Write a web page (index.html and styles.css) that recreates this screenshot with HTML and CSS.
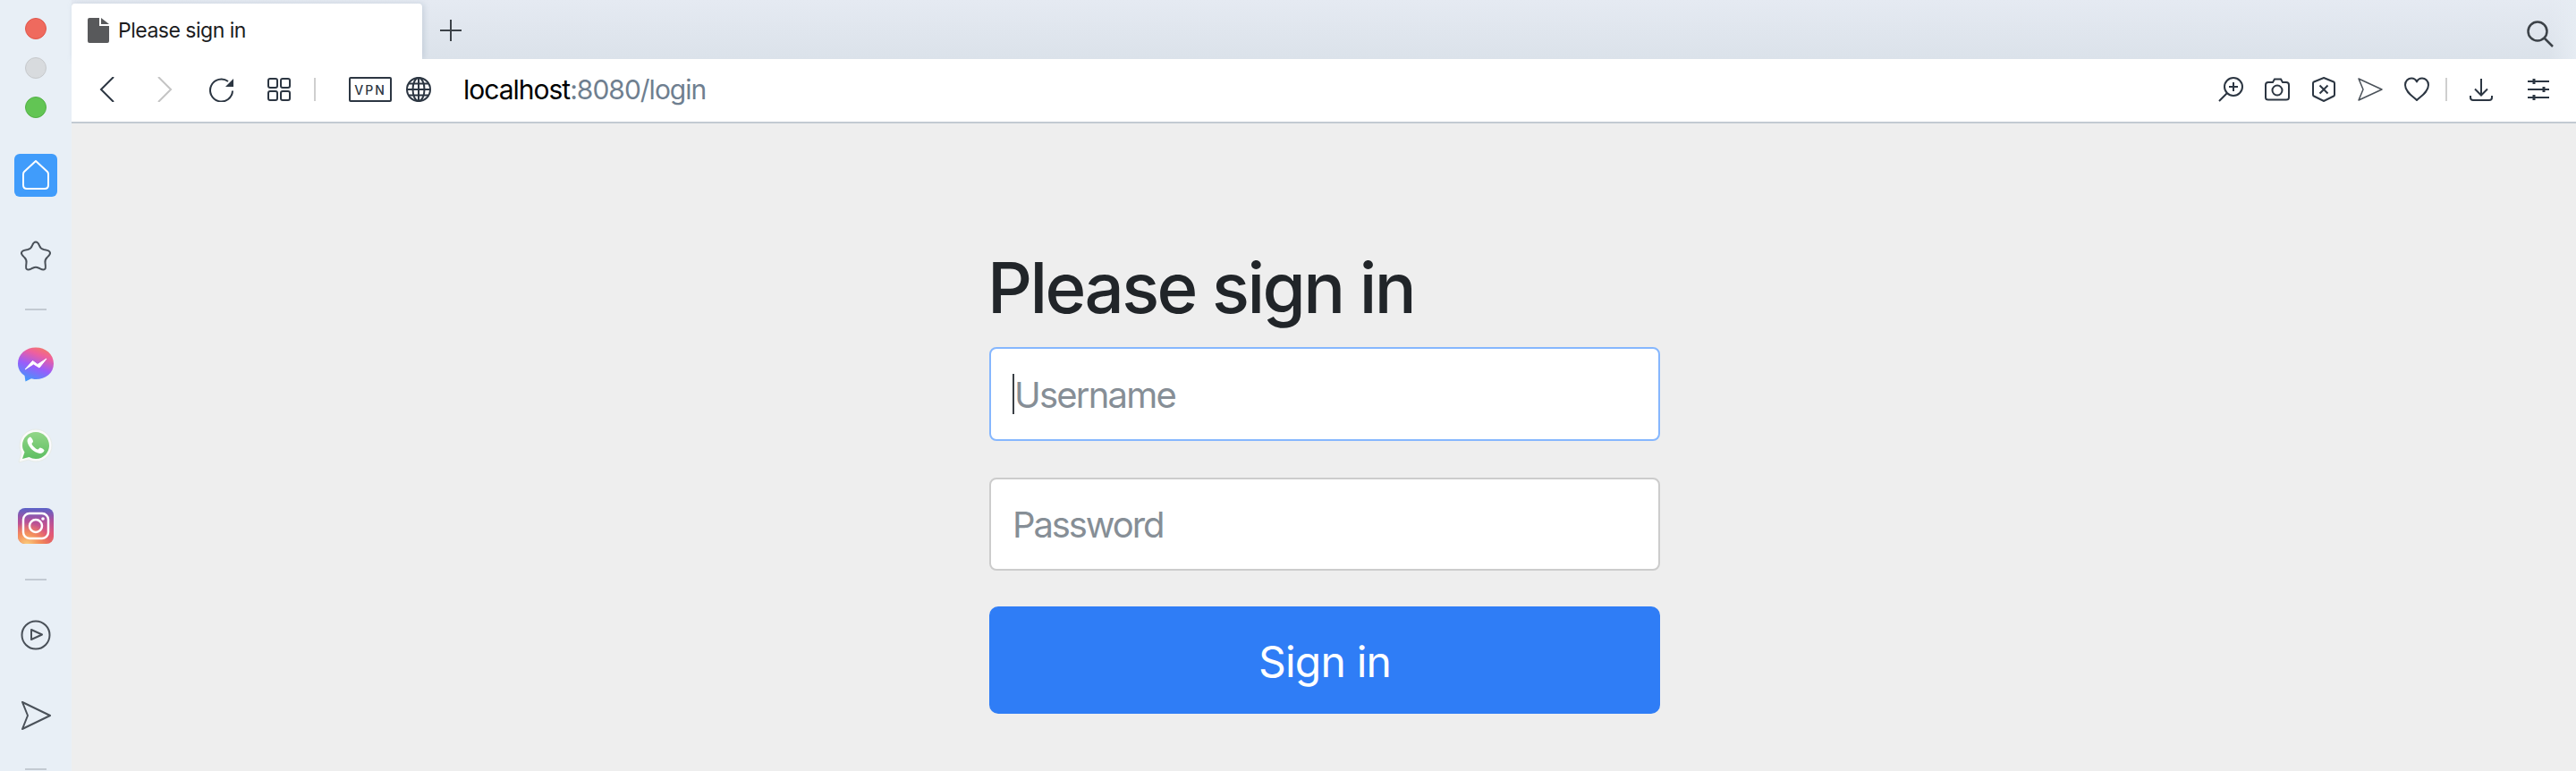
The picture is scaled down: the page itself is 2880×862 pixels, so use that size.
FILE: index.html
```html
<!DOCTYPE html>
<html lang="en">
<head>
  <meta charset="UTF-8">
  <title>Please sign in</title>
  <link rel="stylesheet" href="styles.css">
</head>
<body>
  <aside class="sidebar">
    <div class="lights">
      <span class="light red"></span>
      <span class="light grey"></span>
      <span class="light green"></span>
    </div>

    <div class="side-item home-item">
      <span class="home-btn">
        <svg width="32" height="36" viewBox="0 0 32 36"><path d="M16 2 L29 14 Q30 15 30 17 V29 Q30 33 26 33 H6 Q2 33 2 29 V17 Q2 15 3 14 Z" fill="none" stroke="#fff" stroke-width="2" stroke-linejoin="round"/></svg>
      </span>
    </div>
    <div class="side-item">
      <svg class="side-icon" width="36" height="36" viewBox="0 0 36 36"><path d="M18 2.5 C20 2.5 21 4 22 6.500 C23 9.500 24.500 10.500 27 11 C30.500 11.500 33.500 12.500 34 14.500 C34.500 16.500 32.500 18 30.500 20 C28.500 22 28 23 28.500 26 C29 29.500 29.500 32 28 33 C26 34.500 23.500 32.500 21 31.500 C19 30.500 17 30.500 15 31.500 C12.500 32.500 10 34.500 8 33 C6.500 32 7 29.500 7.500 26 C8 23 7.500 22 5.500 20 C3.500 18 1.500 16.500 2 14.500 C2.500 12.500 5.500 11.500 9 11 C11.500 10.500 13 9.500 14 6.500 C15 4 16 2.500 18 2.500 Z"/></svg>
    </div>
    <hr class="side-sep">

    <div class="side-item">
      <svg width="40" height="40" viewBox="0 0 40 40">
        <defs>
          <linearGradient id="msgr" x1="0.25" y1="1" x2="0.65" y2="0">
            <stop offset="0" stop-color="#3b9bfb"/>
            <stop offset="0.45" stop-color="#9a5cfa"/>
            <stop offset="0.8" stop-color="#ee5f9f"/>
            <stop offset="1" stop-color="#f2766e"/>
          </linearGradient>
        </defs>
        <path d="M20 0.500 C31 0.500 40 8 40 18.500 C40 29 31 36 20 36 C18 36 16.500 35.800 15 35.300 L8.500 38.500 L7.500 32 C3 29 0 24.500 0 18.500 C0 8 9 0.500 20 0.500 Z" fill="url(#msgr)"/>
        <path d="M8 25 L16.500 15.500 L22 19.500 L32 13 L24 23 L17.500 19 Z" fill="#fff" stroke="#fff" stroke-linejoin="round"/>
      </svg>
    </div>
    <div class="side-item">
      <svg width="40" height="40" viewBox="0 0 40 40">
        <defs>
          <linearGradient id="wapp" x1="0" y1="0" x2="0" y2="1">
            <stop offset="0" stop-color="#93d688"/>
            <stop offset="1" stop-color="#5fbf63"/>
          </linearGradient>
        </defs>
        <path d="M1 39 L4 28 C2.500 25.500 2 23 2 20 C2 10 10 2 20 2 C30 2 38 10 38 20 C38 30 30 38 20 38 C17 38 14.500 37.300 12 36 Z" fill="#fafafa" stroke="#e6ebe8"/>
        <path d="M5 35 L7.500 27.500 C6 25.300 5 23 5 20 C5 11.700 11.700 5 20 5 C28.300 5 35 11.700 35 20 C35 28.300 28.300 35 20 35 C17.300 35 15 34.300 12.500 33 Z" fill="url(#wapp)"/>
        <path d="M13.500 10.500 C12 11 10.500 13 10.500 15 C11 21 17.500 28 24.500 29 C27 29 29 27.500 29.500 25.500 C29.500 24.500 26.500 22.800 25 22.500 C24 22.500 23.500 24 22.500 24.500 C20 24.500 15.500 19.500 15.500 18 C16 17 17 16.500 17 15.500 C17 14 15 10.500 13.500 10.500 Z" fill="#fff"/>
      </svg>
    </div>
    <div class="side-item">
      <svg width="40" height="40" viewBox="0 0 40 40">
        <defs>
          <linearGradient id="ig-base" x1="0" y1="0" x2="0" y2="1">
            <stop offset="0" stop-color="#5a62c8"/>
            <stop offset="0.35" stop-color="#b0509c"/>
            <stop offset="0.7" stop-color="#e0577a"/>
            <stop offset="1" stop-color="#e86a5c"/>
          </linearGradient>
          <radialGradient id="ig-glow" cx="0.25" cy="1.05" r="0.65">
            <stop offset="0" stop-color="#fbd580"/>
            <stop offset="0.55" stop-color="#f79a58" stop-opacity="0.8"/>
            <stop offset="1" stop-color="#f79a58" stop-opacity="0"/>
          </radialGradient>
        </defs>
        <rect width="40" height="40" rx="8" fill="url(#ig-base)"/>
        <rect width="40" height="40" rx="8" fill="url(#ig-glow)"/>
        <rect x="6" y="6" width="28" height="28" rx="7" fill="none" stroke="#fff" stroke-width="2.500"/>
        <circle cx="20" cy="20" r="7" fill="none" stroke="#fff" stroke-width="2.500"/>
        <circle cx="28" cy="12" r="1.800" fill="#fff"/>
      </svg>
    </div>
    <hr class="side-sep">

    <div class="side-item">
      <svg class="side-icon" width="34" height="34" viewBox="0 0 34 34">
        <circle cx="17" cy="17" r="15.500"/>
        <path d="M12 11 L24 16.500 L12 22 Z" stroke-linejoin="round"/>
      </svg>
    </div>
    <div class="side-item">
      <svg class="side-icon" width="34" height="34" viewBox="0 0 34 34"><path d="M2 2 L33 17 L2 32 L8 17 Z" stroke-linejoin="round"/></svg>
    </div>
    <hr class="side-sep">
  </aside>

  <div class="browser">
    <div class="tabbar">
      <div class="tab">
        <svg class="doc" width="24" height="28" viewBox="0 0 24 28"><path d="M2 0 H13 V9 H24 V26 Q24 28 22 28 H2 Q0 28 0 26 V2 Q0 0 2 0 Z M15 0 L24 7 H15 Z" fill="#58595b"/></svg>
        <span class="tab-title">Please sign in</span>
      </div>
      <svg class="new-tab" width="24" height="24" viewBox="0 0 24 24"><path d="M12 0 V24 M0 12 H24"/></svg>
      <svg class="tab-search" width="30" height="30" viewBox="0 0 30 30"><circle cx="12" cy="12" r="10.500"/><path d="M19.500 19.500 L29 29"/></svg>
    </div>

    <div class="toolbar">
      <span class="slot">
        <svg class="tool" width="28" height="28" viewBox="0 0 28 28"><path d="M21 0 L7 14 L21 28"/></svg>
      </span>
      <span class="slot">
        <svg class="tool off" width="28" height="28" viewBox="0 0 28 28"><path d="M7 0 L21 14 L7 28"/></svg>
      </span>
      <span class="slot">
        <svg class="tool" width="28" height="28" viewBox="0 0 28 28"><path d="M21 5 A12.500 12.500 0 1 0 26 15.500"/><path d="M27 2 V11 H18 Z" class="solid"/></svg>
      </span>
      <span class="slot">
        <svg class="tool" width="28" height="28" viewBox="0 0 28 28">
          <rect x="2" y="2" width="10" height="10" rx="2"/>
          <rect x="16" y="2" width="10" height="10" rx="2"/>
          <rect x="2" y="16" width="10" height="10" rx="2"/>
          <rect x="16" y="16" width="10" height="10" rx="2"/>
        </svg>
      </span>
      <span class="bar-sep first-sep"></span>
      <span class="vpn">VPN</span>
      <svg class="tool globe" width="28" height="28" viewBox="0 0 28 28">
        <circle cx="14" cy="14" r="13"/>
        <ellipse cx="14" cy="14" rx="6.500" ry="13"/>
        <path d="M14 1 V27 M1 14 H27 M3 7.500 H25 M3 20.500 H25"/>
      </svg>
      <div class="address"><b>localhost</b>:8080/login</div>

      <div class="tools-right">
        <span class="slot-sm">
          <svg class="tool" width="28" height="28" viewBox="0 0 28 28"><circle cx="17" cy="11" r="10"/><path d="M10 18 L1 27 M17 6 V16 M12 11 H22"/></svg>
        </span>
        <span class="slot-sm">
          <svg class="tool" width="28" height="28" viewBox="0 0 28 28"><path d="M4 6 H9 L11 2.500 H18 L20 6 H24 Q27 6 27 9 V23 Q27 25.500 24 25.500 H4 Q1 25.500 1 23 V9 Q1 6 4 6 Z"/><circle cx="14" cy="15" r="5.500"/></svg>
        </span>
        <span class="slot-sm">
          <svg class="tool" width="28" height="28" viewBox="0 0 28 28"><path d="M14 1 L25 5.500 Q26 6 26 7 V20 Q26 21 25 21.500 L14 27 L3 21.500 Q2 21 2 20 V7 Q2 6 3 5.500 Z"/><path d="M9.500 9.500 L18.500 18.500 M18.500 9.500 L9.500 18.500"/></svg>
        </span>
        <span class="slot-sm">
          <svg class="tool thin" width="28" height="28" viewBox="0 0 28 28"><path d="M1 2 L27 14 L1 26 L6 14 Z" stroke-linejoin="round"/></svg>
        </span>
        <span class="slot-sm">
          <svg class="tool" width="28" height="28" viewBox="0 0 28 28"><path d="M14 26 C10 22 1 17 1 9 C1 4.500 4.500 1.500 8 1.500 C10.500 1.500 13 3 14 5.500 C15 3 17.500 1.500 20 1.500 C23.500 1.500 27 4.500 27 9 C27 17 18 22 14 26 Z" stroke-linejoin="round"/></svg>
        </span>
        <span class="bar-sep second-sep"></span>
        <span class="slot-dl">
          <svg class="tool" width="28" height="28" viewBox="0 0 28 28"><path d="M14 2 V20 M7 13.500 L14 20.500 L21 13.500 M2 21 V23 Q2 26 5 26 H23 Q26 26 26 23 V21"/></svg>
        </span>
        <span class="slot-set">
          <svg class="tool" width="28" height="28" viewBox="0 0 28 28">
            <path d="M2 5 H26 M2 14 H26 M2 23 H26"/>
            <path d="M9 2 V8 M20 11 V17 M9 20 V26" class="ticks"/>
          </svg>
        </span>
      </div>
    </div>

    <main class="page">
      <form class="signin">
        <h1>Please sign in</h1>
        <div class="field">
          <input class="input focused" type="text" placeholder="Username">
          <span class="caret"></span>
        </div>
        <div class="field last-field">
          <input class="input pass" type="password" placeholder="Password">
        </div>
        <button class="submit" type="button">Sign in</button>
      </form>
    </main>
  </div>
</body>
</html>
```

FILE: styles.css
```css
* {
  box-sizing: border-box;
}

html,
body {
  height: 100%;
}

body {
  margin: 0;
  display: flex;
  overflow: hidden;
  font-family: Inter, 'Liberation Sans', sans-serif;
  background-color: #eee;
  color: #212529;
}

/* left rail */
.sidebar {
  width: 80px;
  flex-shrink: 0;
  display: flex;
  flex-direction: column;
  align-items: center;
  background-color: #e8eff6;
}

.lights {
  display: flex;
  flex-direction: column;
  gap: 20px;
  padding-top: 20px;
  margin-bottom: 19px;
}

.light {
  display: block;
  width: 24px;
  height: 24px;
  border-radius: 50%;
}

.red {
  background-color: #ef6a5e;
  border: 1px solid #e0564a;
}

.grey {
  background-color: #d8dbde;
  border: 1px solid #c6c9cc;
}

.green {
  background-color: #62c554;
  border: 1px solid #52b045;
}

.side-item {
  height: 90px;
  flex-shrink: 0;
  display: flex;
  align-items: center;
  justify-content: center;
}

.home-btn {
  width: 48px;
  height: 48px;
  display: flex;
  align-items: center;
  justify-content: center;
  background-color: #409cfb;
  border-radius: 6px;
}

.side-icon {
  fill: none;
  stroke: #4a5159;
  stroke-width: 2;
}

.side-sep {
  width: 24px;
  height: 2px;
  flex-shrink: 0;
  margin: 14px 0 16px;
  border: none;
  background-color: #c3cad2;
}

/* browser chrome */
.browser {
  flex: 1;
  display: flex;
  flex-direction: column;
  min-width: 0;
}

.tabbar {
  height: 66px;
  flex-shrink: 0;
  display: flex;
  align-items: flex-end;
  background: linear-gradient(to right, transparent calc(100% - 30px), #e6ecf3), linear-gradient(#e5eaf2, #dbe2ea);
}

.tab {
  width: 392px;
  height: 62px;
  display: flex;
  align-items: center;
  gap: 10px;
  padding: 0 0 3px 18px;
  background-color: #fff;
  border-radius: 4px 4px 0 0;
  box-shadow: 2px 0 6px rgba(150, 165, 185, 0.35);
}

.doc {
  flex-shrink: 0;
}

.tab-title {
  font-size: 23px;
  letter-spacing: -0.5px;
  color: #1c1c1e;
}

.new-tab {
  margin: 0 0 20px 20px;
  fill: none;
  stroke: #3c4248;
  stroke-width: 2;
}

.tab-search {
  margin: 0 25px 13px auto;
  fill: none;
  stroke: #3c4248;
  stroke-width: 2.500;
}

.toolbar {
  height: 72px;
  flex-shrink: 0;
  display: flex;
  align-items: center;
  padding: 0 0 2px 8px;
  background-color: #fff;
  border-bottom: 2px solid #c2cad2;
}

.slot {
  width: 64px;
  display: flex;
  justify-content: center;
}

.slot-sm {
  width: 52px;
  display: flex;
  justify-content: center;
}

.slot-dl {
  width: 52px;
  margin-left: 12px;
  display: flex;
  justify-content: center;
}

.slot-set {
  width: 52px;
  margin-left: 12px;
  display: flex;
  justify-content: center;
}

.tool {
  display: block;
  fill: none;
  stroke: #2c3642;
  stroke-width: 2;
}

.tool.off {
  stroke: #c4c4c4;
}

.tool.thin {
  stroke: #4a5159;
  stroke-width: 1.500;
}

.tool .solid {
  fill: #2c3642;
  stroke: none;
}

.tool .ticks {
  stroke-width: 3;
}

.bar-sep {
  width: 2px;
  height: 26px;
  flex-shrink: 0;
  background-color: #cfcfcf;
}

.first-sep {
  margin-left: 7px;
}

.second-sep {
  margin-left: 6px;
}

.vpn {
  width: 48px;
  height: 28px;
  margin-left: 37px;
  display: flex;
  align-items: center;
  justify-content: center;
  border: 2px solid #2c3642;
  border-radius: 2px;
  font-size: 14px;
  font-weight: 500;
  letter-spacing: 2px;
  color: #2c3642;
}

.globe {
  margin-left: 16px;
}

.address {
  margin-left: 36px;
  font-size: 30px;
  letter-spacing: -1px;
  color: #6f7f90;
}

.address b {
  font-weight: 400;
  color: #000;
}

.tools-right {
  margin-left: auto;
  padding-right: 16px;
  display: flex;
  align-items: center;
}

/* page content */
.page {
  flex: 1;
  display: flex;
  justify-content: center;
  padding: 137px 0 0 2px;
  background-color: #eee;
}

.signin {
  width: 750px;
}

h1 {
  margin: 0 0 19px -2px;
  font-size: 78px;
  font-weight: 500;
  line-height: 1.2;
  letter-spacing: -2.6px;
  color: #212529;
}

.field {
  position: relative;
  margin-bottom: 41px;
}

.last-field {
  margin-bottom: 40px;
}

.input {
  display: block;
  width: 100%;
  height: 104px;
  padding: 2px 26px 0;
  font-family: inherit;
  font-size: 40px;
  letter-spacing: -1.8px;
  color: #212529;
  background-color: #fff;
  border: 2px solid #ccc;
  border-radius: 8px;
  outline: none;
}

.input::placeholder {
  color: #868e96;
  opacity: 1;
}

.input.focused {
  height: 105px;
  border-color: #86b7fe;
}

.input.pass {
  padding-left: 24px;
  letter-spacing: -2.1px;
}

.caret {
  position: absolute;
  left: 26px;
  top: 30px;
  width: 2px;
  height: 45px;
  background-color: #3a3f45;
}

.submit {
  display: block;
  width: 100%;
  height: 120px;
  padding: 3px 0 0;
  font-family: inherit;
  font-size: 48px;
  letter-spacing: -0.8px;
  color: #fff;
  background-color: #2f7df6;
  border: none;
  border-radius: 10px;
}
```
